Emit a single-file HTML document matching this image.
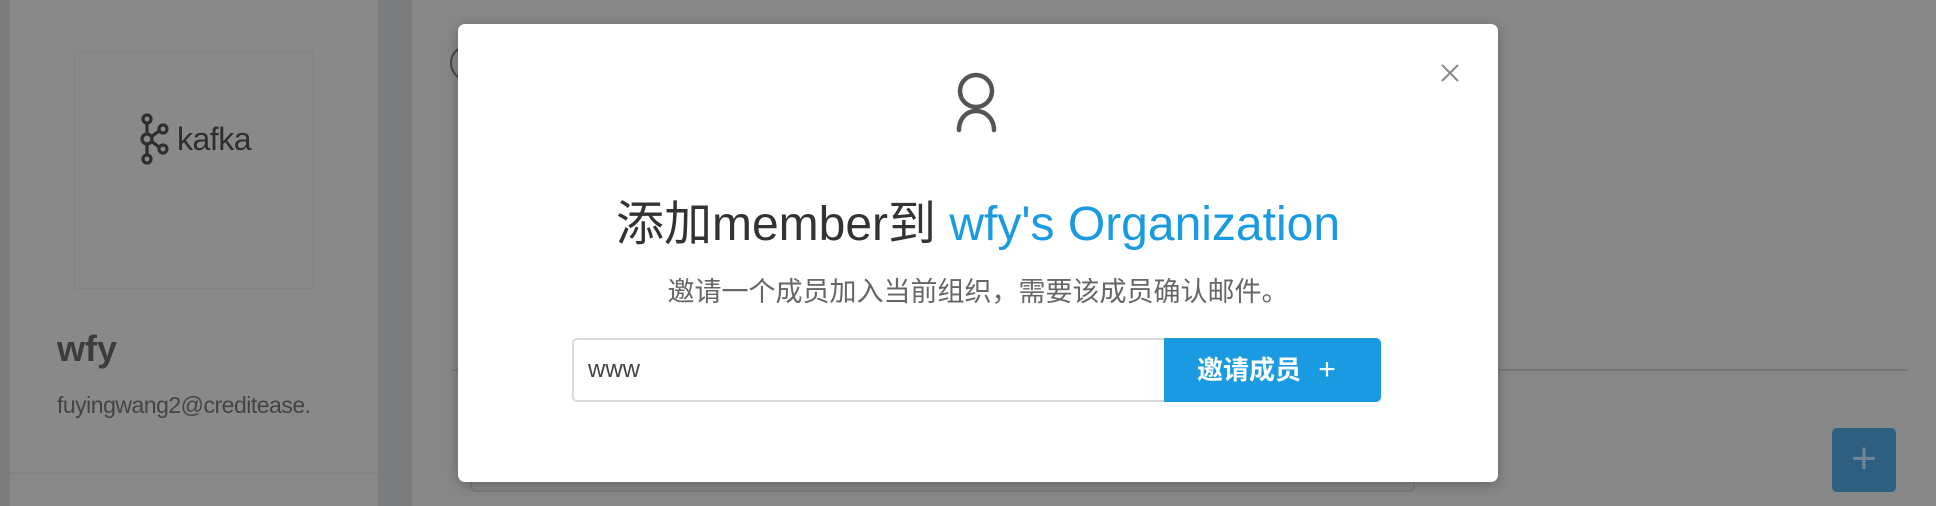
<!DOCTYPE html>
<html><head><meta charset="utf-8"><style>
*{margin:0;padding:0;box-sizing:border-box}
body{width:1936px;height:506px;overflow:hidden;background:#7b7c7e;position:relative;font-family:"Liberation Sans","Noto Sans CJK SC",sans-serif}
.abs{position:absolute}
</style></head><body>
<div class="abs" style="left:10px;top:0;width:368px;height:506px;background:#898989"></div>
<div class="abs" style="left:10px;top:472px;width:368px;height:2px;background:#838383"></div>
<div class="abs" style="left:74px;top:51px;width:239px;height:238px;border:1px solid #838383"></div>
<svg class="abs" style="left:138px;top:113px" width="36" height="52" viewBox="0 0 36 52" fill="none" stroke="#2e2e2e" stroke-width="3.2">
<circle cx="9" cy="6" r="4"/><circle cx="9" cy="26" r="5"/><circle cx="9" cy="46" r="4"/><circle cx="25" cy="16" r="4"/><circle cx="25" cy="36" r="4"/>
<path d="M9 10V21M9 31V42M13 24L21 18M13 28L21 34"/></svg>
<div class="abs" style="left:177px;top:121px;font-size:32px;color:#2e2e2e;letter-spacing:-0.5px">kafka</div>
<div class="abs" style="left:57px;top:328px;font-size:36px;font-weight:bold;color:#3c3c3c">wfy</div>
<div class="abs" style="left:57px;top:392px;font-size:23px;color:#444;letter-spacing:-0.5px">fuyingwang2@creditease.</div>
<div class="abs" style="left:412px;top:0;width:1524px;height:506px;background:#878787"></div>
<div class="abs" style="left:450px;top:45px;width:36px;height:36px;border:2px solid #444;border-radius:50%"></div>
<div class="abs" style="left:452px;top:369px;width:1456px;height:2px;background:#767676"></div>
<div class="abs" style="left:470px;top:300px;width:945px;height:192px;border:2px solid #7a7a7a;border-radius:6px"></div>
<div class="abs" style="left:1832px;top:428px;width:64px;height:64px;background:#2f5f80;border-radius:5px;color:#6f8494;font-size:44px;text-align:center;line-height:62px;font-weight:200">+</div>
<div class="abs" style="left:458px;top:24px;width:1040px;height:458px;background:#fff;border-radius:7px;box-shadow:0 3px 12px rgba(0,0,0,.25)"></div>
<svg class="abs" style="left:1440px;top:63px" width="20" height="20" viewBox="0 0 20 20" stroke="#888" stroke-width="2"><path d="M2 2L18 18M18 2L2 18"/></svg>
<svg class="abs" style="left:954px;top:72px" width="46" height="64" viewBox="0 0 46 64" fill="none" stroke="#555" stroke-width="4.5" stroke-linecap="round">
<circle cx="22" cy="19" r="16"/><path d="M5 58C5 47 12 39 22 39C32 39 40 47 40 58"/></svg>
<div class="abs" style="left:458px;top:184px;width:1040px;text-align:center;font-size:48px;color:#333;white-space:nowrap">添加member到 <span style="color:#1a9ae0">wfy's Organization</span></div>
<div class="abs" style="left:458px;top:270px;width:1040px;text-align:center;font-size:27px;color:#666">邀请一个成员加入当前组织，需要该成员确认邮件。</div>
<div class="abs" style="left:572px;top:338px;width:596px;height:64px;border:2px solid #d9d9d9;border-right:none;border-radius:5px 0 0 5px;font-size:24px;color:#444;padding-left:14px;line-height:60px">www</div>
<div class="abs" style="left:1164px;top:338px;width:217px;height:64px;background:#1a9ae0;border-radius:0 5px 5px 0;color:#fff;font-size:26px;font-weight:bold;line-height:64px;padding-left:33px">邀请成员 <span style="font-weight:normal;font-size:30px;margin-left:10px">+</span></div>
</body></html>
